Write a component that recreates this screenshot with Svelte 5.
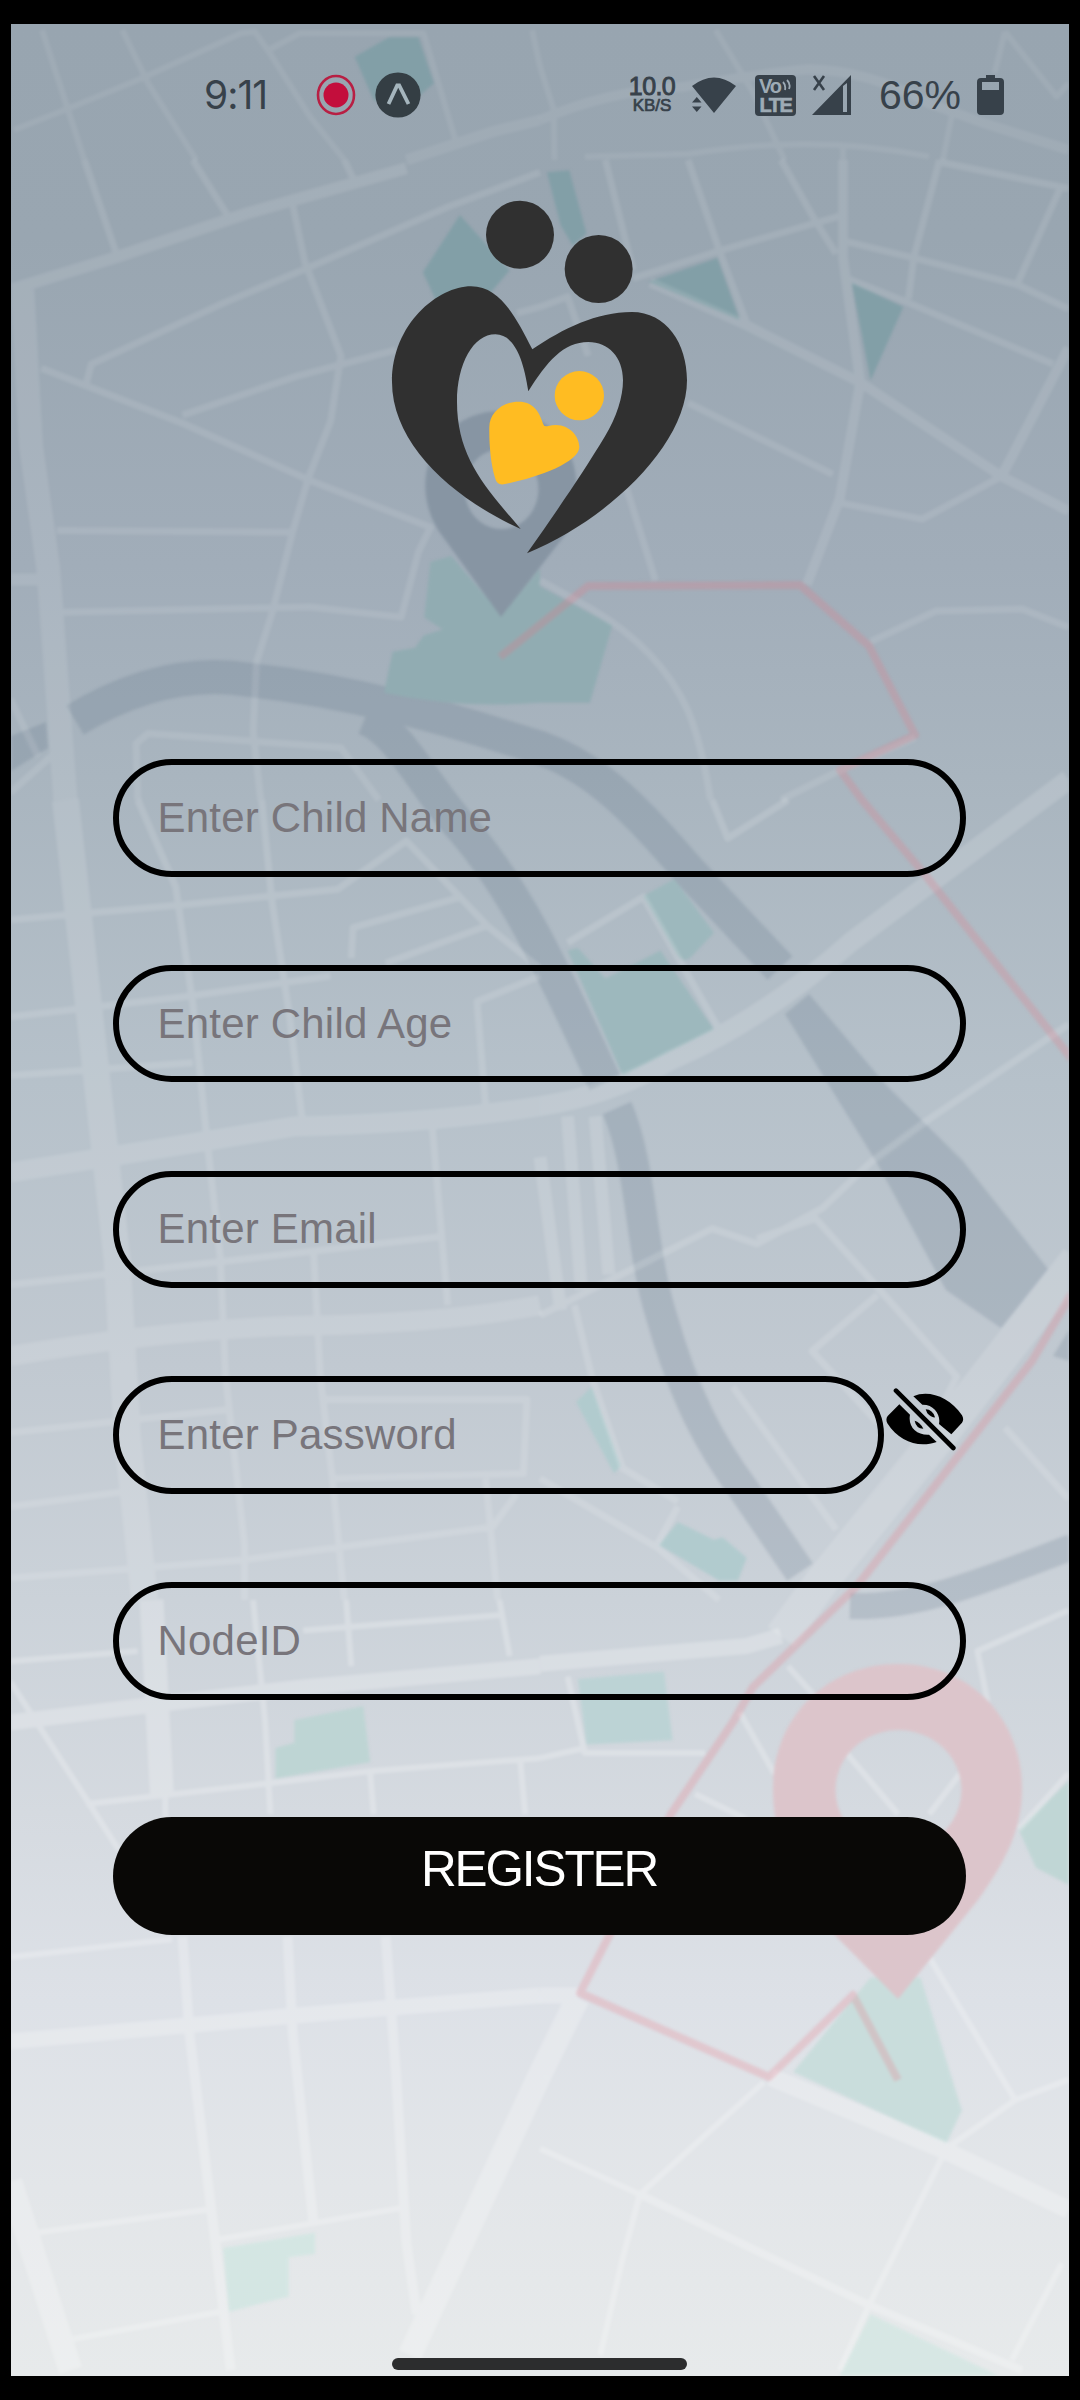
<script>
  // The map is split in tiles; each holds its own local coordinates.
  const X = 0.34439;
  const tiles = [
    { x: 0, y: 0, sy: 0.33333, tone: 0.075,
      parks: [['#829fa7', 'M1030 170L1130 112L1215 112L1260 250L1170 330L1085 300Z']],
      roads: [
        [6, 'M122 90L245 480M355 90L430 250L570 480M40 390L200 325L400 240L700 100L740 95L790 170L900 350L1000 480M780 150L870 100L1230 100L1325 430M1545 90L1568 200'],
        [11, 'M1180 480L1430 395L1568 360'],
      ] },
    { x: 540, y: 0, sy: 0.33333, tone: 0.075, parks: [],
      roads: [
        [6, 'M510 90L620 280L710 480M0 200L40 330L42 480M1350 95L1320 220M1350 95L1500 290L1535 250M1195 350L1170 480M130 470L430 462Q800 400 1130 470M880 430V480'],
        [10, 'M0 360Q200 270 420 260Q650 220 780 208Q950 210 1130 310L1290 370L1535 450'],
      ] },
    { x: 0, y: 160, sy: 0.40816, tone: 0.1,
      parks: [
        ['#829fa7', 'M1335 135L1480 270L1400 350L1280 370L1228 275Z'],
        ['#91acb2', 'M1250 985L1310 970L1457 1115L1568 1000V1330Q1330 1345 1115 1305L1140 1205L1205 1195L1230 1165L1285 1150L1232 1120Z'],
      ],
      roads: [
        [7, 'M245 0L340 235M560 0L660 135M1000 0L1025 45M850 110L885 250L990 480L960 640L895 780L850 910L790 1110L745 1230L735 1400L757 1568M1568 30L1300 115L900 262L650 350L265 500L250 550M120 510L530 645L900 785L1250 900L1215 960L1165 1120L900 1095L180 1108M530 625L860 530L1150 465M165 908L850 912M1500 375L1568 360M400 1568L395 1430L430 1405L990 1440L1100 1568M30 1320L110 1460M30 1550L150 1460'],
        [12, 'M30 318L330 240L720 130L1180 20M30 1028H150'],
        [24, 'M65 318L90 700L140 1000L190 1568'],
      ] },
    { x: 540, y: 160, sy: 0.40816, tone: 0.1,
      parks: [
        ['#829fa7', 'M20 30L85 25L135 180L95 210L60 160ZM315 298L515 240L580 392ZM905 300L1055 360L960 540Z'],
        ['#91acb2', 'M0 1045L210 1140L145 1330H0Z'],
      ],
      roads: [
        [7, 'M190 0L270 270M430 0L520 220L600 400M700 0L800 150L860 230M270 290L530 220L880 135M0 360L80 335L140 480M1160 0L1085 240L1070 340M1160 5L1535 70M1510 70L1385 305M890 200L1085 240L1385 305L1535 365M890 290L1070 350L1490 500M430 595L850 770M870 840L1110 880L1340 775L1535 860M250 800L335 1030M0 1030L150 1100Q350 1200 430 1350Q470 1430 495 1568M960 1180L1150 1105L1400 1100L1535 1145M700 1568L860 1500L1090 1415'],
        [10, 'M320 300L600 405L930 545L1340 775L1535 860M1340 775L1535 460M880 0V240L930 545L870 830L775 1040'],
      ] },
    { x: 0, y: 800, sy: 0.5102, tone: 0.13, parks: [],
      roads: [
        [7, 'M400 0L510 170L560 400L600 660L640 900L655 1130L710 1460V1568M760 0L790 200L840 420L880 640M910 880L930 1130L965 1330L1000 1568M30 235L540 205L980 175L1180 80L1420 250L1568 330M1020 310L1025 250L1340 190M1120 320L1420 245M30 425L540 385L960 345M30 540L560 515M1568 345L1385 395L1410 600M1255 640L1300 990M30 950L640 905L1290 855M30 1240L660 1195M940 1175H1530L1520 1320L970 1330M30 1385L370 1355M30 1525L700 1490L1430 1425L1500 1360M1410 1330L1445 1568'],
        [20, 'M30 730Q500 680 850 640Q1250 635 1568 600M30 1090Q500 1035 900 1030Q1300 1025 1568 990'],
        [27, 'M190 0L240 300L340 900L370 1250L420 1568'],
      ] },
    { x: 540, y: 800, sy: 0.5102, tone: 0.14,
      parks: [
        ['#9db8bd', 'M300 188L390 155L505 260L435 310Q410 320 395 300ZM80 295L110 290L190 350L350 295L505 450L240 540Z'],
        ['#b1cbce', 'M105 1180L150 1150L235 1305L215 1320ZM345 1460L400 1415L505 1450L530 1445L600 1485L575 1530H520Z'],
      ],
      roads: [
        [7, 'M500 0L545 75L720 0M80 280L300 190L520 450M960 710L1120 630L1535 440M0 1010L280 915L500 840L630 870L820 800L960 710M630 860L800 820L960 940L1210 1130L1150 1210M980 970L790 1080L980 1220M100 990L150 1130L240 1310L400 1375M0 1330L340 1465L520 1568M560 1150L860 1430M1350 1230L1535 1370M340 1460L400 1385'],
        [13, 'M80 620L120 960M160 620L200 930M0 700L60 1000'],
        [20, 'M0 600Q200 580 380 510Q650 430 900 280L1535 -40'],
        [34, 'M1560 900L1180 1230L820 1530L700 1640'],
      ] },
    { x: 0, y: 1600, sy: 0.5102, tone: 0.24,
      parks: [
        ['#bed5d4', 'M855 235L1055 208L1075 318L800 350V290L855 280Z'],
        ['#d4e6e3', 'M648 1270L915 1240V1282L838 1288V1365L665 1395Z'],
      ],
      roads: [
        [6, 'M735 0L770 240L785 420M1005 0L1020 130M1450 0L1480 110M30 120L400 100M880 60L1450 30M30 160L250 390L345 490M250 400L770 360L1080 335L1568 310M1075 340L1085 420M1510 310L1525 420M480 380V430M30 700L500 665M105 1240L600 1195M620 1255L1180 1190M200 1450L640 1395'],
        [10, 'M530 660L550 850L620 1230L670 1510M835 660L850 850L910 1220M1120 660L1150 930L1180 1260L1210 1400'],
        [16, 'M30 240Q500 200 900 170L1568 130M30 865L850 815L1568 775'],
        [24, 'M440 0L470 380M30 1140L205 1510M1190 1480L1568 930'],
      ] },
    { x: 540, y: 1600, sy: 0.5102, tone: 0.24,
      parks: [
        ['#bcd3d5', 'M110 155L360 140L385 275L135 283Z'],
        ['#c0d6d5', 'M1535 355V558L1440 525L1390 450Z'],
        ['#c9dddc', 'M735 925L960 740H1105L1225 1000L1180 1065Z'],
        ['#d7e7e4', 'M870 1520L960 1400L1330 1520Z'],
      ],
      roads: [
        [6, 'M80 150L130 300H480M0 310L130 290M580 220L680 340M450 380L600 430M720 130L800 190M1535 20L1270 100L1300 200M1535 340L1390 450M890 300L1040 420M1220 340L1130 420M1130 700L1380 980L1535 940M1380 980L1180 1075L950 1390L870 1510M0 1075L290 1165L650 945M290 1165L240 1290L175 1480M1515 1300L1370 1490'],
        [8, 'M290 1165L950 1380L1400 1510'],
        [16, 'M0 125L600 90L700 70M0 775H110'],
        [24, 'M110 780L0 930'],
        [18, 'M670 935L1180 1080L1535 1195'],
      ] },
  ];

  const fields = ['Enter Child Name', 'Enter Child Age', 'Enter Email', 'Enter Password', 'NodeID'];
  let hidden = $state(true);
</script>

<div class="device">
  <main class="screen">
    <svg class="map" viewBox="11 24 1058 2352" preserveAspectRatio="none" aria-hidden="true">
      <g class="water">
        <path class="w36" d="M75 720C130 687 190 670 250 680C350 691 445 717 540 748C600 769 640 815 690 872L780 968" />
        <path class="w36" d="M365 718C400 732 421 782 462 828C520 895 555 975 605 1083" />
        <path class="w30" d="M617 1108C642 1165 640 1250 662 1318C684 1395 710 1445 744 1490L800 1572" />
        <path class="w26" d="M1072 1547C985 1580 920 1608 850 1606" />
        <path class="solid" d="M11 736L46 722L48 748L11 771ZM785 1014L809 994L886 1085L962 1160L1048 1269L1001 1328L946 1290L877 1163ZM1053 1356L1069 1330V1361Z" />
      </g>
      {#each tiles as t}
        <g transform="translate({t.x} {t.y}) scale({X} {t.sy})">
          {#each t.parks as [fill, d]}<path {fill} {d} />{/each}
          <g class="roads" opacity={t.tone}>
            {#each t.roads as [w, d]}<path stroke-width={w} {d} />{/each}
          </g>
        </g>
      {/each}
      <path class="route" d="M500 657L588 586L800 585L869 646L915 735L840 770L862 800L926 876L1075 1063M1075 1288L1032 1361L857 1586L753 1687L733 1722L671 1814L580 1993L769 2077L853 1995L898 2080" />
      <path fill="#8795a3" fill-rule="evenodd" d="M501 617L438 530C405 475 440 411 501 411C565 411 595 475 565 535ZM501 449a37 40 0 1 0 1 0Z" />
      <path fill="#dcc5cb" fill-rule="evenodd" d="M898 1999L820 1920C787 1875 773 1830 773 1789C773 1718 826 1664 898 1664C970 1664 1022 1718 1022 1789C1022 1830 1005 1862 978 1900ZM898 1730a63 60 0 1 0 1 0Z" />
    </svg>

    <header class="status">
      <div class="side left">
        <span class="clock">9:11</span>
        <svg class="rec" viewBox="0 0 40 42"><ellipse cx="20" cy="21" rx="18" ry="19" fill="none" stroke="#b81f43" stroke-width="2.6" /><circle cx="20" cy="21" r="12.5" fill="#c30e3c" /></svg>
        <svg class="app" viewBox="0 0 46 46"><circle cx="23" cy="23" r="22.6" fill="#343e44" /><path d="M13.5 32L22.2 13.5H24.2L33.5 32" fill="none" stroke="#a5b5bd" stroke-width="3.8" /></svg>
      </div>
      <div class="side right">
        <span class="speed"><b>10.0</b><small>KB/S</small></span>
        <svg class="wifi" viewBox="0 0 44 36"><path d="M0 9Q22 -8 44 9L22 36ZM0 25.5L4.8 20L9.5 25.5ZM0 29.5H9.5L4.8 35Z" /></svg>
        <span class="volte"><span class="vo">Vo<svg viewBox="0 0 10 12"><path d="M1 3Q4 6 3 11M5 1Q9 5 7 10" /></svg></span><span class="lte">LTE</span></span>
        <svg class="signal" viewBox="0 0 40 40"><path fill-rule="evenodd" d="M0 40L39 0V40ZM31 11V37H35V8Z" /><path d="M2 1L12 15M12 1L2 15" fill="none" stroke="#37414a" stroke-width="2.6" /></svg>
        <span class="percent">66%</span>
        <svg class="battery" viewBox="0 0 27 40"><path fill-rule="evenodd" d="M9 0H18V3H23Q27 3 27 7V36Q27 40 23 40H4Q0 40 0 36V7Q0 3 4 3H9ZM5 7V15H22V7Z" /></svg>
      </div>
    </header>

    <svg class="logo" viewBox="60 50 900 1080" role="img" aria-label="Family">
      <g fill="#303030">
        <circle cx="450" cy="163" r="102" /><circle cx="686" cy="266" r="102" />
        <path d="M452 1046C255 957 66 795 66 605C66 430 205 318 303 318C390 318 437 409 487 507C580 444 680 395 785 395C890 395 951 490 951 600C951 790 722 1014 471 1119C555 1000 640 876 705 768C740 710 759 650 759 600C759 530 715 485 655 485C580 485 530 545 475 633C460 530 430 462 376 462C310 462 261 550 261 665C261 830 345 920 452 1046Z" />
      </g>
      <g fill="#ffbc22">
        <circle cx="628" cy="646" r="74" />
        <path d="M358 740C358 700 395 664 446 664C490 664 509 695 519 730Q522 741 535 737C592 722 628 766 628 800C628 846 500 893 405 911Q381 917 375 892C362 850 357 790 358 740Z" />
      </g>
    </svg>

    <form onsubmit={(e) => e.preventDefault()}>
      {#each fields as name, i}
        <div class="row">
          <input type={i === 3 && hidden ? 'password' : 'text'} placeholder={name} aria-label={name} />
          {#if i === 3}
            <button type="button" class="eye" aria-label="Show password" onclick={() => (hidden = !hidden)}>
              <svg viewBox="78 86 234 188">
                <path d="M160 111C205 91 268 112 306 168Q313 180 306 190L274 225L237 194C243 166 222 135 187 136ZM118 135L150 166C143 202 170 228 207 226L230 248C177 266 118 249 82 192Q76 180 83 170Z" />
                <path d="M197 150Q218 151 225 174Q215 176 202 162ZM164 184Q180 188 190 208Q168 207 164 184Z" />
                <path d="M108 94L280 266" fill="none" stroke="#000" stroke-width="14" stroke-linecap="round" />
              </svg>
            </button>
          {/if}
        </div>
      {/each}
      <button class="submit">REGISTER</button>
    </form>
    <div class="home"></div>
  </main>
</div>

<style>
  :global(body) { margin: 0; background: #000; }
  .device { box-sizing: border-box; width: 1080px; height: 2400px; padding: 24px 11px; background: #000; }
  .screen {
    position: relative; display: flex; flex-direction: column; align-items: center;
    width: 1058px; height: 2352px; overflow: hidden;
    font-family: "Liberation Sans", Arial, sans-serif;
    background: linear-gradient(#98a5b0 0, #99a6b1 9%, #a1adb9 23%, #a9b5bf 32%, #b6c1ca 45%, #c1c9d1 57%, #cbd2d9 67%, #d5dae0 76%, #dde1e7 84%, #e3e6e9 92%, #e7eaeb 100%);
  }
  .map { position: absolute; inset: 0; width: 100%; height: 100%; filter: blur(1.6px); }
  .map path { vector-effect: non-scaling-stroke; }
  .water { opacity: 0.18; fill: none; stroke: #50657a; }
  .water .solid { fill: #50657a; stroke: none; }
  .w36 { stroke-width: 34; }
  .w30 { stroke-width: 31; }
  .w26 { stroke-width: 26; }
  .roads { fill: none; stroke: #fff; stroke-linejoin: round; }
  .route { fill: none; stroke: #e87684; stroke-width: 8; stroke-linejoin: round; opacity: 0.24; }

  .status { position: relative; display: flex; justify-content: space-between; align-items: center; width: 100%; height: 142px; box-sizing: border-box; padding: 0 65px 0 193px; color: #37414a; fill: #37414a; }
  .side { display: flex; align-items: center; }
  .clock { width: 112px; font: 400 39px/1 Inter, sans-serif; letter-spacing: -1px; padding-bottom: 2px; }
  .rec { width: 40px; height: 42px; margin-right: 19px; }
  .app { width: 46px; height: 46px; }
  .speed { display: flex; flex-direction: column; align-items: center; width: 48px; margin-right: 16px; }
  .speed b { font-size: 25px; font-weight: 400; line-height: 21px; letter-spacing: -0.6px; -webkit-text-stroke: 0.9px #37414a; }
  .speed small { font-size: 17px; font-weight: 400; line-height: 17px; letter-spacing: -0.1px; -webkit-text-stroke: 0.7px #37414a; }
  .wifi { width: 44px; height: 36px; margin-right: 19px; }
  .volte { display: flex; flex-direction: column; align-items: center; width: 41px; height: 41px; margin-right: 16px; border-radius: 4px; background: #37414a; color: #9eabb5; font-weight: 700; }
  .vo { display: flex; height: 21px; font-size: 20px; line-height: 23px; letter-spacing: -1px; }
  .vo svg { width: 10px; height: 12px; margin: 4px 0 0 1px; fill: none; stroke: #9eabb5; stroke-width: 1.8; }
  .lte { font-size: 20px; line-height: 18px; letter-spacing: -1.5px; -webkit-text-stroke: 0.6px #9eabb5; }
  .signal { width: 40px; height: 40px; margin-right: 27px; }
  .percent { width: 98px; font-size: 41px; line-height: 40px; }
  .battery { width: 27px; height: 40px; }

  .logo { position: relative; width: 300px; height: 360px; margin-top: 31px; }
  form { position: relative; display: flex; flex-direction: column; gap: 88.2px; width: 853px; margin: 202px 2px 0 0; }
  .row { display: flex; height: 117.6px; }
  input { box-sizing: border-box; flex: 1; min-width: 0; height: 117.6px; padding: 0 38px 0 39px; border: 6px solid #000; border-radius: 59px; outline: 0; background: none; color: #222; font: 42px/50px "Liberation Sans", Arial, sans-serif; letter-spacing: 0.2px; }
  input::placeholder { color: #78757b; opacity: 1; }
  .eye { display: flex; width: 82px; padding: 12px 0 0 2px; border: 0; background: none; }
  .eye svg { width: 78px; height: 62.7px; }
  .submit { height: 117.6px; margin-top: 29px; padding: 0 0 14px; border: 0; border-radius: 59px; background: #090806; color: #fff; font: 49.5px/60px "Liberation Sans", Arial, sans-serif; letter-spacing: -2.1px; }
  .home { position: absolute; left: 381px; bottom: 6px; width: 295px; height: 12px; border-radius: 6px; background: #2c2d2e; }
</style>
